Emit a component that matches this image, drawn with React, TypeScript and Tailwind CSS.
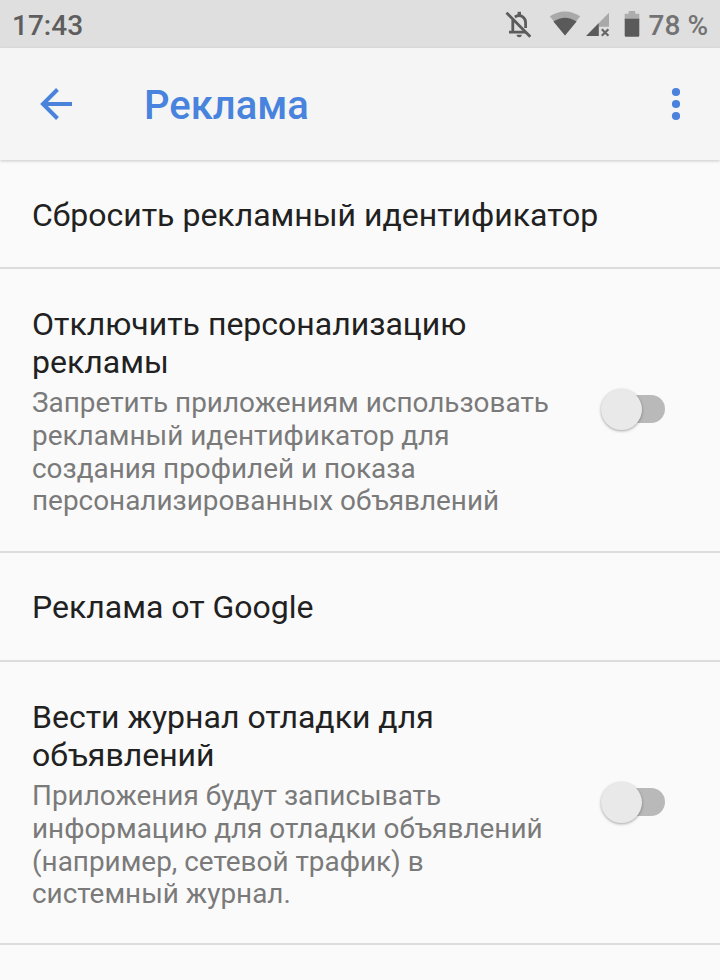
import React from 'react';

function Toggle() {
  return (
    <div className="relative h-11 w-[68px] shrink-0">
      <div className="absolute top-[7px] left-[24px] h-[28px] w-[41px] rounded-full bg-[#b9b9b9]" />
      <div className="absolute top-[1px] left-[1px] size-[41px] rounded-full bg-[#e9e9e9] shadow-[0_1px_3px_rgba(0,0,0,0.35)]" />
    </div>
  );
}

function Title({ lines }: { lines: string[] }) {
  return (
    <div className="text-[32px] leading-[38px] text-[#212121]">
      {lines.map((line) => (
        <div key={line}>{line}</div>
      ))}
    </div>
  );
}

function Summary({ lines }: { lines: string[] }) {
  return (
    <div className="mt-[6px] -mb-[1px] text-[27.9px] leading-[32.8px] text-[#7a7a7a]">
      {lines.map((line) => (
        <div key={line}>{line}</div>
      ))}
    </div>
  );
}

function StatusIcons() {
  return (
    <svg className="h-12 w-[140px]" viewBox="504 0 140 48" fill="none">
      <g stroke="#5c5c5c" strokeWidth="2.8">
        <path d="M506.5 12.8 530.3 36.8" strokeWidth="2.8" />
        <path d="M512.8 20V32.2M509 32.2H525.5M514.8 17Q519.2 14.2 522.8 16.8Q525.6 19 525.6 22.5V28" />
        <path d="M519.3 11.8V15" strokeWidth="3.4" />
      </g>
      <path d="M516.6 34.8h5.2a2.6 2.4 0 0 1-5.2 0Z" fill="#5c5c5c" />
      <path d="M549.8 16.3Q565 6.8 580.2 16.3L565 35.4Z" fill="#a9a9a9" />
      <path d="M553.4 21.6Q565 14 576.6 21.6L565 35.4Z" fill="#5a5a5a" />
      <path d="M609 12.8V26.8H598.8V23Z" fill="#a9a9a9" />
      <path d="M598.8 23V36H586Z" fill="#5a5a5a" />
      <path d="m601.8 29.2 6.6 6.6m0-6.6-6.6 6.6" stroke="#666" strokeWidth="2.2" />
      <path d="M628.7 11h6.5v2.7h4.1V20h-14.6v-6.3h4Z" fill="#adadad" />
      <path d="M624.7 18.8h14.6v16.6q0 1.3-1.3 1.3h-12q-1.3 0-1.3-1.3Z" fill="#5a5a5a" />
    </svg>
  );
}

export default function App() {
  return (
    <div className="flex h-[980px] w-[720px] flex-col overflow-hidden bg-[#fafafa] font-[Roboto,sans-serif] whitespace-nowrap">
      <div className="flex h-12 shrink-0 items-center justify-between bg-[#dfdfdf] px-3 text-[28px] font-medium">
        <span className="pt-[3px] text-[#5e5e5e]">17:43</span>
        <div className="flex items-center gap-[5px]">
          <StatusIcons />
          <span className="pt-[3px] text-[#737373]">78 %</span>
        </div>
      </div>
      <header className="z-10 flex h-[112px] shrink-0 items-center bg-[#f5f5f5] pr-[34px] pl-10 shadow-[0_1px_3px_rgba(0,0,0,0.2)]">
        <svg className="h-8 w-8" viewBox="0 0 32 32" fill="none" stroke="#4a82dc" strokeWidth="4">
          <path d="M32 16H3M17.5 1.5 3 16l14.5 14.5" />
        </svg>
        <h1 className="ml-[72px] pt-[4px] text-[40px] font-medium text-[#4883dd]">Реклама</h1>
        <svg className="ml-auto h-9 w-[20px]" viewBox="0 0 20 36" fill="#4a82dc">
          <circle cx="10" cy="6" r="4.1" />
          <circle cx="10" cy="18" r="4.1" />
          <circle cx="10" cy="30" r="4.1" />
        </svg>
      </header>
      <section className="flex h-[109px] shrink-0 items-center border-b-2 border-[#dcdcdc] px-8 pt-[2px]">
        <Title lines={['Сбросить рекламный идентификатор']} />
      </section>
      <section className="flex h-[284px] shrink-0 items-center justify-between border-b-2 border-[#dcdcdc] pr-[52px] pl-8">
        <div className="pt-[2px]">
          <Title lines={['Отключить персонализацию', 'рекламы']} />
          <Summary
            lines={[
              'Запретить приложениям использовать',
              'рекламный идентификатор для',
              'создания профилей и показа',
              'персонализированных объявлений',
            ]}
          />
        </div>
        <Toggle />
      </section>
      <section className="flex h-[109px] shrink-0 items-center border-b-2 border-[#dcdcdc] px-8 pt-[1px]">
        <Title lines={['Реклама от Google']} />
      </section>
      <section className="flex h-[283px] shrink-0 items-center justify-between border-b-2 border-[#dcdcdc] pr-[52px] pl-8">
        <div className="pt-[3px]">
          <Title lines={['Вести журнал отладки для', 'объявлений']} />
          <Summary
            lines={[
              'Приложения будут записывать',
              'информацию для отладки объявлений',
              '(например, сетевой трафик) в',
              'системный журнал.',
            ]}
          />
        </div>
        <Toggle />
      </section>
    </div>
  );
}
